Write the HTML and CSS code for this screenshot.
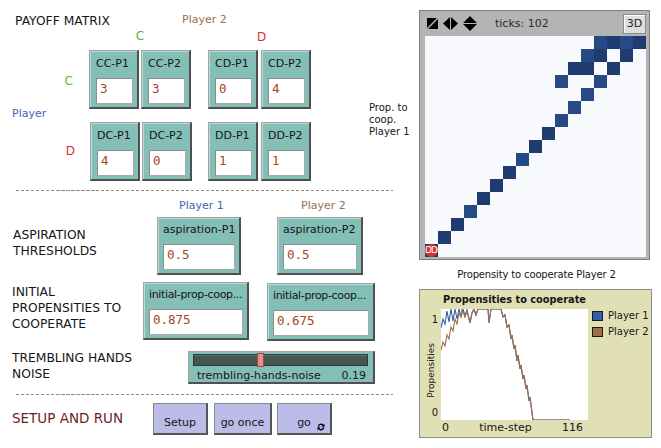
FILE: index.html
```html
<!DOCTYPE html>
<html>
<head>
<meta charset="utf-8">
<link rel="stylesheet" href="styles.css">
</head>
<body>
<div class="app">
  <div class="left">
    <div class="payoff">
      <div class="title">PAYOFF MATRIX</div>
      <div class="p2-head brown">Player 2</div>
      <div class="col-lbl col-c green">C</div>
      <div class="col-lbl col-d red">D</div>
      <div class="player-side blue">Player</div>
      <div class="row-lbl row-c green">C</div>
      <div class="row-lbl row-d red">D</div>
      <div class="pair pair-cc">
        <div class="iw iw-sm"><div class="iw-label">CC-P1</div><div class="iw-box">3</div></div>
        <div class="iw iw-sm"><div class="iw-label">CC-P2</div><div class="iw-box">3</div></div>
      </div>
      <div class="pair pair-cd">
        <div class="iw iw-sm"><div class="iw-label">CD-P1</div><div class="iw-box">0</div></div>
        <div class="iw iw-sm"><div class="iw-label">CD-P2</div><div class="iw-box">4</div></div>
      </div>
      <div class="pair pair-dc">
        <div class="iw iw-sm"><div class="iw-label">DC-P1</div><div class="iw-box">4</div></div>
        <div class="iw iw-sm"><div class="iw-label">DC-P2</div><div class="iw-box">0</div></div>
      </div>
      <div class="pair pair-dd">
        <div class="iw iw-sm"><div class="iw-label">DD-P1</div><div class="iw-box">1</div></div>
        <div class="iw iw-sm"><div class="iw-label">DD-P2</div><div class="iw-box">1</div></div>
      </div>
      <div class="prop-label">Prop. to<br>coop.<br>Player 1</div>
    </div>

    <div class="divider div-1"></div>

    <div class="sec-asp">
      <div class="sec-label asp-label">ASPIRATION<br>THRESHOLDS</div>
      <div class="asp-head">
        <div class="hd1 blue">Player 1</div>
        <div class="hd2 brown">Player 2</div>
      </div>
      <div class="asp-widgets">
        <div class="iw iw-lg w-asp1"><div class="iw-label">aspiration-P1</div><div class="iw-box">0.5</div></div>
        <div class="iw iw-lg w-asp2"><div class="iw-label">aspiration-P2</div><div class="iw-box">0.5</div></div>
      </div>
    </div>

    <div class="sec-init">
      <div class="sec-label init-label">INITIAL<br>PROPENSITIES TO<br>COOPERATE</div>
      <div class="init-widgets">
        <div class="iw iw-lg w-init1"><div class="iw-label tight">initial-prop-coop...</div><div class="iw-box">0.875</div></div>
        <div class="iw iw-lg w-init2"><div class="iw-label tight">initial-prop-coop...</div><div class="iw-box">0.675</div></div>
      </div>
    </div>

    <div class="sec-noise">
      <div class="sec-label noise-label">TREMBLING HANDS<br>NOISE</div>
      <div class="slider">
        <div class="track"><div class="thumb" style="left:36.6%"></div></div>
        <div class="slider-foot"><span>trembling-hands-noise</span><span>0.19</span></div>
      </div>
    </div>

    <div class="divider div-2"></div>

    <div class="sec-run">
      <div class="run-label">SETUP AND RUN</div>
      <div class="buttons">
        <div class="btn b-setup">Setup</div>
        <div class="btn b-once">go once</div>
        <div class="btn b-go">go
          <svg class="forever" width="8" height="8" viewBox="0 0 8 8">
            <path d="M1.3 3.6 A2.7 2.7 0 0 1 5.9 2.1" stroke="#000" stroke-width="1.4" fill="none"/>
            <path d="M7.5 0.6 L7.5 3.8 L4.3 3.8 Z" fill="#000"/>
            <path d="M6.7 4.4 A2.7 2.7 0 0 1 2.1 5.9" stroke="#000" stroke-width="1.4" fill="none"/>
            <path d="M0.5 7.4 L0.5 4.2 L3.7 4.2 Z" fill="#000"/>
          </svg>
        </div>
      </div>
    </div>
  </div>

  <div class="right">
    <div class="view-frame">
      <div class="toolbar">
        <svg class="ic1" width="11" height="11" viewBox="0 0 11 11">
          <rect width="11" height="11" fill="#000"/>
          <path d="M0 11 L11 0" stroke="#b4b4b4" stroke-width="1.5"/>
        </svg>
        <svg class="ic2" width="15" height="13" viewBox="0 0 15 13">
          <path d="M0 6.5 L7 0 L7 13 Z M8 0 L15 6.5 L8 13 Z" fill="#000"/>
        </svg>
        <svg class="ic3" width="14" height="15" viewBox="0 0 14 15">
          <path d="M0 7 L7 0 L14 7 Z M0 8 L14 8 L7 15 Z" fill="#000"/>
        </svg>
        <span class="ticks">ticks: 102</span>
        <div class="btn3d">3D</div>
      </div>
      <div class="world">
        <div class="p" style="grid-area:1/14"></div>
        <div class="p d" style="grid-area:1/15"></div>
        <div class="p" style="grid-area:1/16"></div>
        <div class="p d" style="grid-area:1/17"></div>
        <div class="p" style="grid-area:2/13"></div>
        <div class="p d" style="grid-area:2/14"></div>
        <div class="p d" style="grid-area:2/16"></div>
        <div class="p d" style="grid-area:3/12"></div>
        <div class="p d" style="grid-area:3/13"></div>
        <div class="p d" style="grid-area:3/15"></div>
        <div class="p" style="grid-area:4/11"></div>
        <div class="p" style="grid-area:4/14"></div>
        <div class="p" style="grid-area:5/13"></div>
        <div class="p" style="grid-area:6/12"></div>
        <div class="p" style="grid-area:7/11"></div>
        <div class="p d" style="grid-area:8/10"></div>
        <div class="p d" style="grid-area:9/9"></div>
        <div class="p" style="grid-area:10/8"></div>
        <div class="p d" style="grid-area:11/7"></div>
        <div class="p d" style="grid-area:12/6"></div>
        <div class="p d" style="grid-area:13/5"></div>
        <div class="p" style="grid-area:14/4"></div>
        <div class="p d" style="grid-area:15/3"></div>
        <div class="p d" style="grid-area:16/2"></div>
        <div class="p d turtle" style="grid-area:17/1"><span class="dot"></span><span class="tlabel">DD</span></div>
      </div>
    </div>
    <div class="caption">Propensity to cooperate Player 2</div>
    <div class="plot">
      <div class="plot-title">Propensities to cooperate</div>
      <div class="yaxis">
        <span class="ytick top">1</span>
        <div class="ylabel-wrap"><span class="ylabel">Propensities</span></div>
        <span class="ytick bot">0</span>
      </div>
      <svg class="plot-area" width="147" height="111" viewBox="0 0 147 111">
        <polyline fill="none" stroke="#345da9" stroke-width="1.1" points="0,19 2,10 4,15 6,2 8,13 10,0 12,12 14,0 16,10 18,0 20,8 22,0 24,7 26,1 29,14 31,4 33,0 35,6 37,0 47,0 48,14 50,0 60,0 62,8 64,6 66,18 68,16 70,30 71,26 73,40 74,36 76,52 77,46 79,60 80,56 82,70 83,66 85,80 86,76 88,92 89,88 91,104 92,111 129,111"/>
        <polyline fill="none" stroke="#9d6e48" stroke-width="1.1" points="0,41 2,33 4,37 6,26 8,30 10,18 12,22 14,10 16,15 18,4 20,8 21,0 24,8 26,2 29,14 31,4 33,0 35,6 37,0 47,0 48,14 50,0 60,0 62,8 64,6 66,18 68,16 70,30 71,26 73,40 74,36 76,52 77,46 79,60 80,56 82,70 83,66 85,80 86,76 88,92 89,88 91,104 92,111 129,111"/>
      </svg>
      <div class="legend">
        <div class="lg-item"><span class="sw sw-blue"></span>Player 1</div>
        <div class="lg-item"><span class="sw sw-brown"></span>Player 2</div>
      </div>
      <div class="xaxis"><span>0</span><span>time-step</span><span>116</span></div>
    </div>
  </div>
</div>
</body>
</html>
```

FILE: styles.css
```css
* { box-sizing: border-box; }
body { margin: 0; background: #fff; font-family: "DejaVu Sans", "Liberation Sans", sans-serif; color: #161616; }
.app { display: flex; width: 661px; height: 448px; overflow: hidden; }
.left { width: 419px; flex: none; }
.right { width: 242px; flex: none; padding-top: 10px; display: flex; flex-direction: column; align-items: flex-start; }

.green { color: #5db33a; }
.red { color: #d7322a; }
.blue { color: #4067b0; }
.brown { color: #9d6e48; }

/* payoff matrix */
.payoff { display: grid; grid-template-columns: 89px 102px 17px 103px 58px 1fr; grid-template-rows: 28px 22px 59px 13px 59px; }
.title { grid-column: 1 / 4; grid-row: 1; align-self: start; padding-left: 15px; margin-top: 14px; font-size: 12.3px; line-height: 15px; white-space: nowrap; }
.p2-head { grid-column: 2 / 5; grid-row: 1; align-self: start; padding-left: 93px; margin-top: 13px; font-size: 11px; line-height: 13px; }
.col-lbl, .row-lbl { font-size: 12px; line-height: 14px; align-self: start; }
.col-c { grid-column: 2; grid-row: 2; justify-self: center; margin-top: 1px; }
.col-d { grid-column: 4; grid-row: 2; justify-self: center; margin-top: 2px; margin-left: 4px; }
.row-c { grid-column: 1; grid-row: 3; justify-self: end; margin-right: 16px; margin-top: 24px; }
.row-d { grid-column: 1; grid-row: 5; justify-self: end; margin-right: 14px; margin-top: 22px; }
.player-side { grid-column: 1; grid-row: 3 / 6; align-self: start; margin-top: 57px; padding-left: 12px; font-size: 11px; line-height: 13px; }
.prop-label { grid-column: 6; grid-row: 3 / 6; align-self: start; margin-top: 52px; font-size: 10px; line-height: 12px; white-space: nowrap; }
.pair { display: flex; gap: 2px; align-items: flex-start; }
.pair-cc { grid-column: 2; grid-row: 3; }
.pair-cd { grid-column: 4; grid-row: 3; gap: 3px; }
.pair-dc { grid-column: 2; grid-row: 5; margin-left: 1px; }
.pair-dd { grid-column: 4; grid-row: 5; gap: 3px; }

/* input widgets */
.iw { flex: none; background: #84bfb7; border: 1px solid #a3a3a3; border-right: 2px solid #505050; border-bottom: 2px solid #505050; box-shadow: inset 1px 1px 0 #b6dad5; }
.iw-sm { width: 50px; height: 59px; padding: 6px 4px 0 6px; }
.iw-lg { height: 58px; padding: 5px 4px 0 5px; }
.w-asp1 { width: 84px; }
.w-asp2 { width: 86px; }
.w-init1 { width: 106px; }
.w-init2 { width: 108px; margin-top: 1px; }
.iw-label { font-size: 11px; line-height: 13px; white-space: nowrap; overflow: hidden; color: #141414; }
.iw-label.tight { letter-spacing: -0.35px; }
.iw-box { margin-top: 8px; height: 26px; background: #fff; border: 1px solid #a9a9a9; border-top-color: #8c8c8c; border-left-color: #8c8c8c; padding: 3px 0 0 3px; font-family: "DejaVu Sans Mono", "Liberation Mono", monospace; font-size: 12.5px; line-height: 14px; color: #a2471c; }

/* dividers */
.divider { height: 1px; width: 377px; margin-left: 16px; background: repeating-linear-gradient(90deg, #8f8f8f 0 3.5px, transparent 3.5px 5px); }
.div-1 { margin-top: 9px; }
.div-2 { margin-top: 10px; }

/* sections */
.sec-label { font-size: 12.3px; line-height: 16px; padding-left: 12px; white-space: nowrap; flex: none; }
.sec-asp { display: grid; grid-template-columns: 157px auto; grid-template-rows: 18px 58px; margin-top: 8px; }
.asp-label { grid-column: 1; grid-row: 1 / 3; align-self: start; margin-top: 28px; padding-left: 13px; }
.asp-head { grid-column: 2; grid-row: 1; display: flex; gap: 36px; font-size: 11px; line-height: 13px; }
.hd1 { width: 84px; padding-left: 22px; }
.hd2 { width: 86px; padding-left: 24px; }
.asp-widgets { grid-column: 2; grid-row: 2; display: flex; gap: 36px; align-items: flex-start; }

.sec-init { display: flex; align-items: flex-start; margin-top: 7px; }
.init-label { width: 143px; margin-top: 2px; }
.init-widgets { display: flex; gap: 18px; align-items: flex-start; }

.sec-noise { display: flex; align-items: flex-start; margin-top: 10px; }
.noise-label { width: 188px; margin-top: -1px; }
.slider { width: 187px; height: 33px; background: #84bfb7; border: 1px solid #a3a3a3; border-right: 2px solid #505050; border-bottom: 2px solid #505050; padding: 2px 5px 0 4px; }
.track { position: relative; height: 12px; background: #41574f; border: 1px solid #2d3c37; box-shadow: inset 0 1px 0 #5b716a; }
.thumb { position: absolute; top: -2px; width: 7px; height: 14px; background: #e48e8e; border: 1px solid #9c4848; }
.slider-foot { display: flex; justify-content: space-between; margin-top: 3px; padding: 0 2px 0 4px; font-size: 11px; line-height: 13px; white-space: nowrap; }

.sec-run { display: flex; align-items: flex-start; margin-top: 8px; }
.run-label { width: 153px; margin-top: 7px; padding-left: 12px; font-size: 13.5px; line-height: 16px; color: #6b1e1e; white-space: nowrap; }
.buttons { display: flex; gap: 6px; }
.btn { position: relative; height: 32px; background: #bcbce8; border: 1px solid #8a8a8a; border-right: 2px solid #555; border-bottom: 2px solid #555; font-size: 11px; line-height: 13px; text-align: center; padding-top: 12px; white-space: nowrap; }
.b-setup { width: 55px; }
.b-once { width: 58px; }
.b-go { width: 55px; margin-left: -1px; }
.forever { position: absolute; right: 5px; bottom: 2px; }

/* view */
.view-frame { width: 231px; height: 250px; border: 1px solid #7e7e7e; background: #b4b4b4; padding: 0 3px 2px 5px; }
.toolbar { height: 25px; display: flex; align-items: center; padding-left: 2px; }
.toolbar svg { display: block; flex: none; }
.ic1 { margin-right: 5px; }
.ic2 { margin-right: 5px; }
.ticks { margin-left: 18px; font-size: 11px; line-height: 13px; color: #2a2a2a; }
.btn3d { margin-left: auto; width: 23px; height: 20px; background: #dedede; border: 1px solid #8a8a8a; box-shadow: inset 1px 1px 0 #fff; font-size: 11px; line-height: 18px; text-align: center; color: #222; }
.world { width: 221px; height: 221px; background: #f8f9fc; display: grid; grid-template-columns: repeat(17, 13px); grid-template-rows: repeat(17, 13px); }
.p { background: #264a86; }
.p.d { background: #1f3b6f; }
.turtle { position: relative; }
.dot { position: absolute; left: 0; top: 0; width: 13px; height: 13px; border-radius: 50%; background: #d9322b; }
.tlabel { position: absolute; left: 0; top: 1px; font-size: 9px; line-height: 11px; letter-spacing: -1px; color: #fff; }

.caption { margin-top: 8px; width: 231px; text-align: center; padding-left: 4px; font-size: 10px; letter-spacing: -0.15px; line-height: 13px; white-space: nowrap; }

/* plot */
.plot { margin-top: 8px; width: 233px; height: 149px; background: #e1e0b5; border: 1px solid #8d8d8d; display: grid; grid-template-columns: 21px 147px 1fr; grid-template-rows: 19px 111px 1fr; }
.plot-title { grid-column: 2; grid-row: 1; justify-self: center; align-self: start; margin-top: 4px; font-weight: bold; font-size: 9.8px; line-height: 12px; white-space: nowrap; }
.yaxis { grid-column: 1; grid-row: 2; display: flex; flex-direction: column; font-size: 10px; line-height: 12px; }
.ytick { align-self: flex-end; padding-right: 3px; }
.ytick.top { margin-top: 5px; }
.ytick.bot { margin-bottom: 1px; }
.ylabel-wrap { flex: 1; display: flex; align-items: center; padding-left: 6px; }
.ylabel { writing-mode: vertical-rl; transform: rotate(180deg); font-size: 9px; line-height: 10px; margin-top: 8px; white-space: nowrap; }
.plot-area { grid-column: 2; grid-row: 2; display: block; background: #fff; }
.legend { grid-column: 3; grid-row: 2; display: flex; flex-direction: column; gap: 4px; padding-left: 4px; margin-top: 1px; font-size: 10px; line-height: 12px; }
.lg-item { display: flex; align-items: center; gap: 5px; white-space: nowrap; }
.sw { width: 11px; height: 10px; border: 1px solid #1a1a1a; flex: none; }
.sw-blue { background: #345da9; }
.sw-brown { background: #9d6e48; }
.xaxis { grid-column: 2; grid-row: 3; display: flex; justify-content: space-between; padding: 0 5px 0 1px; margin-top: 1px; font-size: 11px; line-height: 13px; }
```
